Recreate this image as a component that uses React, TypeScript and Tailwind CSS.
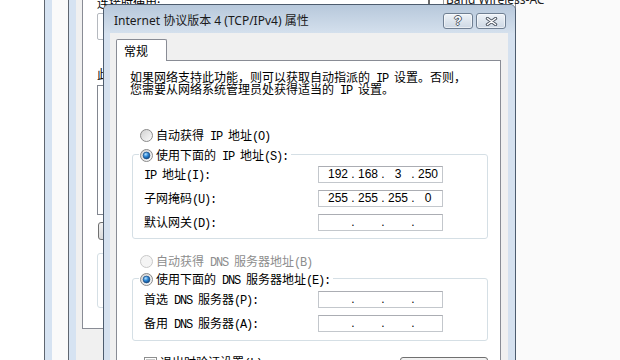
import React from "react";

function Mixed({ text }: { text: string }) {
  const parts = text.split(/([\x20-\x7e]+)/).filter((p) => p.length > 0);
  return (
    <>
      {parts.map((p, i) =>
        /^[\x20-\x7e]+$/.test(p) ? (
          <span
            key={i}
            className="font-['Liberation_Mono','Noto_Sans_CJK_SC',monospace] tracking-[-1.2px]"
          >
            {p}
          </span>
        ) : (
          <span key={i}>{p}</span>
        )
      )}
    </>
  );
}

function Radio({ checked, disabled }: { checked?: boolean; disabled?: boolean }) {
  return (
    <svg width="13" height="13" viewBox="0 0 13 13" className="shrink-0 block">
      <defs>
        <linearGradient id="rbg" x1="0" y1="0" x2="1" y2="1">
          <stop offset="0" stopColor="#cfcfcf" />
          <stop offset="1" stopColor="#fdfdfd" />
        </linearGradient>
        <radialGradient id="rdot" cx="0.38" cy="0.32" r="0.75">
          <stop offset="0" stopColor="#b8e2ff" />
          <stop offset="0.45" stopColor="#2f8ad8" />
          <stop offset="1" stopColor="#0c3e78" />
        </radialGradient>
      </defs>
      <circle
        cx="6.5"
        cy="6.5"
        r="6"
        fill={disabled ? "#f4f4f4" : "url(#rbg)"}
        stroke={disabled ? "#c8c8c8" : "#8a8a8a"}
        strokeWidth="1"
      />
      {checked && (
        <circle cx="6.5" cy="6.5" r="3.4" fill="url(#rdot)" stroke="#1d4d84" strokeWidth="0.7" />
      )}
    </svg>
  );
}

function IpInput({ values }: { values?: string[] }) {
  const v = values ?? ["", "", "", ""];
  return (
    <div className="w-[125px] h-[17px] border border-[#c3c7cc] border-t-[#abadb3] bg-white flex items-center pl-[5px] font-['Liberation_Sans',sans-serif] text-[12px] leading-[15px] text-black">
      {v.map((s, i) => (
        <React.Fragment key={i}>
          <div className="w-[28px] h-[15px] text-center">{s}</div>
          {i < 3 && <div className="w-[2px] flex justify-center">.</div>}
        </React.Fragment>
      ))}
    </div>
  );
}

function Row({ label, values }: { label: string; values?: string[] }) {
  return (
    <div className="flex items-center h-[17px]">
      <div className="w-[174px] leading-[13px]">
        <Mixed text={label} />
      </div>
      <IpInput values={values} />
    </div>
  );
}

function Legend({ label }: { label: string }) {
  return (
    <legend className="ml-[-5px] pl-[1px] pr-[3px]">
      <div className="h-[15px] flex items-end">
        <div className="h-[13px] flex items-center gap-[3px]">
          <Radio checked />
          <span className="leading-[13px] whitespace-nowrap">
            <Mixed text={label} />
          </span>
        </div>
      </div>
    </legend>
  );
}

export default function App() {
  return (
    <div className="relative w-[620px] h-[360px] overflow-hidden bg-white font-['Noto_Sans_CJK_SC',sans-serif] text-[12px] text-black">
      {/* background window A */}
      <div className="absolute left-[44px] top-0 bottom-0 right-0 flex border-l border-[#5f6670]">
        <div className="w-[7px] bg-[#d6e3f2]" />
        <div className="flex-1 bg-[#fafafa]" />
      </div>

      {/* background window B */}
      <div className="absolute left-[68px] top-0 bottom-0 w-[448px] flex border-l border-[#5f6670]">
        <div className="w-[7px] bg-[#d6e3f2]" />
        <div className="flex-1 bg-[#f0f0f0] pl-[6px] flex flex-col">
          <div className="h-[329px] bg-white border-x border-b border-[#898c95] pl-[14px] flex flex-col">
            <div className="mt-[-4px] h-[13px] leading-[13px] whitespace-nowrap">连接时使用:</div>
            <div className="mt-[4px] h-[27px] w-[320px] border border-[#b5b9bf] rounded-[2px]" />
            <div className="mt-[28px] h-[12px] leading-[12px] whitespace-nowrap">此连接使用下列项目(O):</div>
            <div className="mt-[5px] h-[130px] w-[320px] border border-[#828790]" />
            <div className="mt-[7px] h-[18px] w-[80px] ml-[1px] rounded-[3px] border border-[#707070] bg-linear-to-b from-[#f2f2f2] to-[#dcdcdc]" />
            <div className="mt-[13px] h-[55px] w-[320px] rounded-[3px] border border-[#d5dfe5]" />
          </div>
        </div>
      </div>

      {/* bits of the background window showing above the dialog */}
      <div className="absolute left-[428px] top-0 w-[2px] h-[4px] bg-[#6b6b6b]" />
      <div className="absolute left-[443px] top-0 w-[1px] h-[4px] bg-[#9a9a9a]" />
      <div className="absolute left-[446px] top-[-7px] font-['Noto_Sans',sans-serif] text-[12px] leading-[14px] text-[#222] whitespace-nowrap">
        Band Wireless-AC
      </div>

      {/* main dialog */}
      <div className="absolute left-[103px] top-[4px] w-[413px] h-[380px] flex flex-col border border-[#4d5c6e] rounded-t-[6px] overflow-hidden bg-[#d5e1ef]">
        <div className="h-[28px] shrink-0 flex items-start justify-between pt-[8px] pl-[10px] pr-[9px] bg-linear-to-b from-[#b7c8db] to-[#d4e0ed]">
          <div className="font-['Noto_Sans','Noto_Sans_CJK_SC',sans-serif] text-[12px] leading-[16px] text-[#1a1a1a] whitespace-nowrap">
            Internet 协议版本 4 (TCP/IPv4) 属性
          </div>
          <div className="flex gap-[3px]">
            <div className="w-[30px] h-[16px] rounded-[3px] border border-[#6f7f92] bg-linear-to-b from-[#eef3f8] to-[#cdd8e4] shadow-[inset_0_0_0_1px_rgba(255,255,255,0.55)] flex items-center justify-center">
              <span className="font-['Liberation_Sans',sans-serif] font-bold text-[12px] leading-[12px] text-white [text-shadow:1px_0_0_#4f5864,-1px_0_0_#4f5864,0_1px_0_#4f5864,0_-1px_0_#4f5864]">
                ?
              </span>
            </div>
            <div className="w-[30px] h-[16px] rounded-[3px] border border-[#6f7f92] bg-linear-to-b from-[#eef3f8] to-[#cdd8e4] shadow-[inset_0_0_0_1px_rgba(255,255,255,0.55)] flex items-center justify-center">
              <svg width="13" height="9" viewBox="0 0 13 9">
                <path d="M2.5 1.5 L10.5 7.5 M10.5 1.5 L2.5 7.5" stroke="#4f5864" strokeWidth="3.4" strokeLinecap="round" />
                <path d="M2.5 1.5 L10.5 7.5 M10.5 1.5 L2.5 7.5" stroke="#ffffff" strokeWidth="1.5" strokeLinecap="round" />
              </svg>
            </div>
          </div>
        </div>

        <div className="flex-1 ml-[6px] mr-[7px] bg-[#f0f0f0] pl-[6px] pt-[6px] flex flex-col">
          <div className="relative z-10 w-[51px] h-[22px] border border-b-0 border-[#898c95] rounded-t-[2px] bg-white pl-[7px] flex items-center text-[12px] leading-[14px]">
            常规
          </div>
          <div className="mt-[-1px] w-[385px] flex-1 border border-[#898c95] bg-white pl-[15px] pr-[12px] flex flex-col">
            <div className="mt-[10px] ml-[-2px] whitespace-nowrap">
              <div className="h-[12px] leading-[12px]">
                <Mixed text="如果网络支持此功能，则可以获取自动指派的 IP 设置。否则，" />
              </div>
              <div className="h-[12px] leading-[12px]">
                <Mixed text="您需要从网络系统管理员处获得适当的 IP 设置。" />
              </div>
            </div>

            <div className="mt-[34px] ml-[8px] h-[13px] flex items-center gap-[3px]">
              <Radio />
              <span className="leading-[13px] whitespace-nowrap">
                <Mixed text="自动获得 IP 地址(O)" />
              </span>
            </div>

            <fieldset className="mt-[5px] border border-[#d5dfe5] rounded-[3px] pl-[11px] pt-[4px] pb-[7px] flex flex-col gap-[7px]">
              <Legend label="使用下面的 IP 地址(S):" />
              <Row label="IP 地址(I):" values={["192", "168", "3", "250"]} />
              <Row label="子网掩码(U):" values={["255", "255", "255", "0"]} />
              <Row label="默认网关(D):" />
            </fieldset>

            <div className="mt-[16px] ml-[8px] h-[13px] flex items-center gap-[3px] text-[#8d8d8d]">
              <Radio disabled />
              <span className="leading-[13px] whitespace-nowrap">
                <Mixed text="自动获得 DNS 服务器地址(B)" />
              </span>
            </div>

            <fieldset className="mt-[3px] border border-[#d5dfe5] rounded-[3px] pl-[11px] pt-[5px] pb-[8px] flex flex-col gap-[7px]">
              <Legend label="使用下面的 DNS 服务器地址(E):" />
              <Row label="首选 DNS 服务器(P):" />
              <Row label="备用 DNS 服务器(A):" />
            </fieldset>

            <div className="mt-[14px] flex items-start justify-between">
              <div className="ml-[12px] flex items-center gap-[3px]">
                <div className="w-[13px] h-[13px] border border-[#8e8f8f] bg-white p-[1px]">
                  <div className="w-full h-full border border-[#c9c9c9] bg-linear-to-br from-[#dcdcdc] to-[#fbfbfb]" />
                </div>
                <span className="leading-[13px] whitespace-nowrap">
                  <Mixed text="退出时验证设置(L)" />
                </span>
              </div>
              <div className="mt-[2px] w-[88px] h-[23px] rounded-[3px] border border-[#707070] bg-linear-to-b from-[#f2f2f2] to-[#dcdcdc] flex items-center justify-center leading-[13px]">
                <Mixed text="高级(V)..." />
              </div>
            </div>
          </div>
        </div>
      </div>
    </div>
  );
}
